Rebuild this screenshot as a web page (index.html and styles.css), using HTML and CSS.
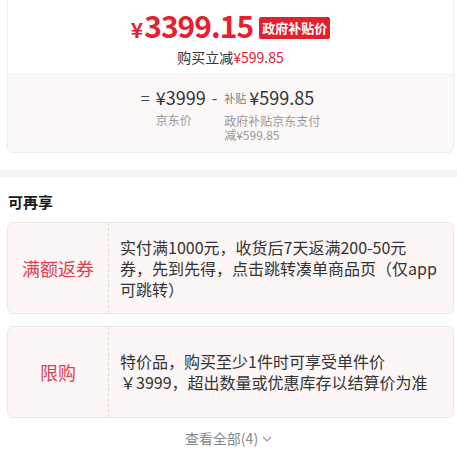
FILE: index.html
```html
<!DOCTYPE html>
<html lang="zh-CN">
<head>
<meta charset="utf-8">
<link rel="stylesheet" href="styles.css">
</head>
<body>
<div class="page">
  <section class="price-card">
    <div class="price-top">
      <div class="price-row">
        <span class="price"><span class="yen">¥</span>3399.15</span>
        <span class="badge">政府补贴价</span>
      </div>
      <div class="save">购买立减<span class="red">¥599.85</span></div>
    </div>
    <div class="price-detail">
      <div class="formula">
        <span class="op">=</span>
        <div class="term">
          <div class="val">¥3999</div>
          <div class="lbl">京东价</div>
        </div>
        <span class="op minus">-</span>
        <div class="term">
          <div class="val"><span class="tag">补贴</span>¥599.85</div>
          <div class="lbl wide">政府补贴京东支付减¥599.85</div>
        </div>
      </div>
    </div>
  </section>
  <div class="band"></div>
  <h3 class="section-title">可再享</h3>
  <div class="promo">
    <div class="promo-type">满额返券</div>
    <div class="promo-desc"><p class="line">实付满1000元，收货后7天返满200-50元</p><p class="line">券，先到先得，点击跳转凑单商品页（仅app可跳转）</p></div>
  </div>
  <div class="promo">
    <div class="promo-type">限购</div>
    <div class="promo-desc"><p class="line">特价品，购买至少1件时可享受单件价</p><p class="line">￥3999，超出数量或优惠库存以结算价为准</p></div>
  </div>
  <div class="more">查看全部(4)<svg class="chev" width="10" height="6" viewBox="0 0 10 6"><path d="M1 1 L5 5 L9 1" fill="none" stroke="#999" stroke-width="1.1"/></svg></div>
</div>
</body>
</html>
```

FILE: styles.css
```css
* { box-sizing: border-box; }
html, body { margin: 0; padding: 0; background: #fff; }
body {
  font-family: "Noto Sans CJK SC", "Noto Sans", sans-serif;
  color: #333;
  overflow: hidden;
}
.page { width: 457px; height: 466px; overflow: hidden; }

.price-card {
  margin: -8px 3px 0 7px;
  border: 1px solid #ececec;
  border-radius: 6px;
  overflow: hidden;
  background: #fff;
}
.price-top {
  padding: 16px 0 7px;
  border-bottom: 1px solid #efefef;
  text-align: center;
}
.price-row {
  display: flex;
  justify-content: center;
  align-items: center;
  height: 36px;
}
.price {
  color: #e5212e;
  font-size: 30px;
  font-weight: 700;
  line-height: 36px;
  letter-spacing: -1px;
}
.yen { font-size: 21px; margin-right: 2px; }
.badge {
  margin-left: 6px;
  background: #e5202d;
  color: #fff;
  font-size: 13px;
  font-weight: 700;
  line-height: 22px;
  height: 22px;
  padding: 0 3px;
  border-radius: 2px;
  margin-top: 1px;
}
.save {
  margin-top: 2px;
  font-size: 14px;
  line-height: 20px;
  color: #333;
}
.red { color: #e5212e; }

.price-detail {
  background: #fdf8f8;
  padding: 10px 0 10px;
  display: flex;
  justify-content: center;
}
.formula {
  display: flex;
  align-items: flex-start;
  margin-left: 2px;
}
.op {
  font-size: 16px;
  line-height: 24px;
  color: #444;
  margin-right: 6px;
}
.minus { margin: 0 7px 0 6px; }
.term { display: flex; flex-direction: column; }
.val {
  font-size: 18px;
  line-height: 24px;
  color: #333;
  white-space: nowrap;
}
.tag {
  font-size: 11px;
  color: #777;
  margin-right: 3px;
  vertical-align: 2px;
}
.lbl {
  margin-top: 4px;
  font-size: 12px;
  line-height: 14px;
  color: #999;
}
.lbl.wide { width: 98px; }

.band {
  margin-top: 17px;
  height: 8px;
  background: #f5f5f9;
}
.section-title {
  margin: 14px 0 0 8px;
  font-size: 15px;
  line-height: 20px;
  font-weight: 700;
  color: #1a1a1a;
}

.promo {
  margin: 10px 3px 0 7px;
  height: 92px;
  display: flex;
  background: #fdf6f6;
  border: 1px solid #efe4e4;
  border-radius: 6px;
}
.promo + .promo { margin-top: 12px; }
.promo-type {
  width: 100px;
  flex: none;
  display: flex;
  align-items: center;
  justify-content: center;
  font-size: 18px;
  color: #e0404e;
}
.promo-desc {
  flex: 1;
  border-left: 1px dashed #e6d6d6;
  padding: 0 10px 0 11px;
  display: flex;
  flex-direction: column;
  justify-content: center;
  font-size: 16px;
  line-height: 21px;
  color: #333;
}
.line { margin: 0; }
.more {
  margin-top: 10px;
  text-align: center;
  font-size: 14px;
  line-height: 20px;
  color: #888;
}
.chev { margin-left: 4px; vertical-align: 2px; }
```
